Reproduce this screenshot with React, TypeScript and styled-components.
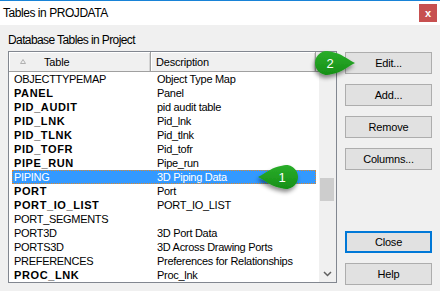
import React from 'react';
import styled, { createGlobalStyle } from 'styled-components';

const GlobalStyle = createGlobalStyle`
  html, body {
    margin: 0;
    padding: 0;
    background: #f0f0f0;
  }
  body {
    font-family: 'Liberation Sans', Arial, sans-serif;
  }
`;

const Window = styled.div`
  position: relative;
  width: 440px;
  height: 291px;
  box-sizing: border-box;
  border-top: 1px solid #1883d7;
  background: #f0f0f0;
  display: flex;
  flex-direction: column;
  overflow: hidden;
`;

const TitleBar = styled.div`
  height: 24px;
  background: #ffffff;
  display: flex;
  align-items: center;
  justify-content: space-between;
  padding: 0 3px;
`;

const Title = styled.span`
  font-size: 12px;
  line-height: 15px;
  letter-spacing: -0.45px;
  color: #000;
`;

const CloseX = styled.div`
  width: 18px;
  height: 18px;
  background: #c75050;
  color: #fff;
  font-size: 11px;
  font-weight: bold;
  display: flex;
  align-items: center;
  justify-content: center;
  line-height: 1;
`;

const Body = styled.div`
  flex: 1;
  display: flex;
  padding: 0 8px;
`;

const LeftPane = styled.div`
  width: 329px;
  display: flex;
  flex-direction: column;
`;

const Label = styled.div`
  padding-top: 8px;
  font-size: 12px;
  line-height: 15px;
  letter-spacing: -0.6px;
  color: #000;
  margin-bottom: 3px;
`;

const ListBox = styled.div`
  height: 232px;
  box-sizing: border-box;
  border: 1px solid #828790;
  background: #fff;
  display: flex;
  overflow: hidden;
`;

const ListMain = styled.div`
  flex: 1;
  display: flex;
  flex-direction: column;
  min-width: 0;
`;

const HeaderRow = styled.div`
  height: 20px;
  display: flex;
  background: #f0f0f0;
  box-sizing: border-box;
  border-bottom: 1px solid #a0a0a0;
`;

const HeaderCell = styled.div<{ $w: number; $pad: number }>`
  width: ${p => p.$w}px;
  box-sizing: border-box;
  padding-left: ${p => p.$pad}px;
  display: flex;
  align-items: center;
  gap: 18px;
  font-size: 11px;
  letter-spacing: -0.2px;
  color: #000;
  border-right: 1px solid #a0a0a0;
  box-shadow: inset 1px 1px #ffffff, inset -1px 0 #d4d4d4;
`;

const HeaderFill = styled.div`
  flex: 1;
`;

const Rows = styled.div`
  flex: 1;
  padding-left: 3px;
`;

const Row = styled.div<{ $selected?: boolean }>`
  width: 304px;
  height: 14px;
  box-sizing: border-box;
  display: flex;
  align-items: center;
  background: ${p => (p.$selected ? '#3399ff' : 'transparent')};
  color: ${p => (p.$selected ? '#fff' : '#000')};
  outline: ${p => (p.$selected ? '1px dotted #e0892a' : 'none')};
  outline-offset: -1px;
  font-size: 11px;
  line-height: 14px;
  white-space: nowrap;
`;

const NameCell = styled.span<{ $bold?: boolean }>`
  width: 139px;
  box-sizing: border-box;
  padding-left: 2px;
  font-weight: ${p => (p.$bold ? 'bold' : 'normal')};
  letter-spacing: ${p => (p.$bold ? '0.6px' : '-0.3px')};
`;

const DescCell = styled.span`
  flex: 1;
  padding-left: 6px;
  letter-spacing: -0.3px;
`;

const ScrollBar = styled.div`
  width: 17px;
  background: #f0f0f0;
  display: flex;
  flex-direction: column;
`;

const ArrowBox = styled.div`
  height: 17px;
  display: flex;
  align-items: center;
  justify-content: center;
`;

const Track = styled.div`
  flex: 1;
  padding: 0 2px 0 1px;
`;

const Thumb = styled.div<{ $top: number; $h: number }>`
  margin-top: ${p => p.$top}px;
  height: ${p => p.$h}px;
  background: #cdcdcd;
`;

const ButtonCol = styled.div`
  flex: 1;
  display: flex;
  flex-direction: column;
  padding: 27px 0 6px 8px;
`;

const ButtonGroup = styled.div<{ $bottom?: boolean }>`
  display: flex;
  flex-direction: column;
  gap: 10px;
  margin-top: ${p => (p.$bottom ? 'auto' : '0')};
`;

const Button = styled.button<{ $default?: boolean }>`
  width: 87px;
  height: 22px;
  box-sizing: border-box;
  background: #e1e1e1;
  border: ${p => (p.$default ? '2px solid #0078d7' : '1px solid #adadad')};
  font-family: 'Liberation Sans', Arial, sans-serif;
  font-size: 11px;
  letter-spacing: -0.2px;
  color: #000;
  padding: 0;
  cursor: default;
`;

const CalloutSvg = styled.svg<{ $x: number; $y: number }>`
  position: absolute;
  left: ${p => p.$x}px;
  top: ${p => p.$y}px;
  overflow: visible;
`;

const CalloutText = styled.text`
  font-family: 'Liberation Sans', Arial, sans-serif;
  font-size: 13px;
  fill: #fff;
`;

type TableRow = { name: string; desc: string; bold?: boolean; selected?: boolean };

const rows: TableRow[] = [
  { name: 'OBJECTTYPEMAP', desc: 'Object Type Map' },
  { name: 'PANEL', desc: 'Panel', bold: true },
  { name: 'PID_AUDIT', desc: 'pid audit table', bold: true },
  { name: 'PID_LNK', desc: 'Pid_lnk', bold: true },
  { name: 'PID_TLNK', desc: 'Pid_tlnk', bold: true },
  { name: 'PID_TOFR', desc: 'Pid_tofr', bold: true },
  { name: 'PIPE_RUN', desc: 'Pipe_run', bold: true },
  { name: 'PIPING', desc: '3D Piping Data', selected: true },
  { name: 'PORT', desc: 'Port', bold: true },
  { name: 'PORT_IO_LIST', desc: 'PORT_IO_LIST', bold: true },
  { name: 'PORT_SEGMENTS', desc: '' },
  { name: 'PORT3D', desc: '3D Port Data' },
  { name: 'PORTS3D', desc: '3D Across Drawing Ports' },
  { name: 'PREFERENCES', desc: 'Preferences for Relationships' },
  { name: 'PROC_LNK', desc: 'Proc_lnk', bold: true },
];

// green teardrop marker; tip on the left or right side
const Callout: React.FC<{ x: number; y: number; n: string; pointLeft?: boolean; id: string }> = ({ x, y, n, pointLeft, id }) => {
  const d = pointLeft
    ? 'M4 16 C 12 12, 18 6, 28 4.7 A 12 12 0 1 1 28 27.3 C 18 26, 12 20, 4 16 Z'
    : 'M44 16 C 36 12, 30 6, 20 4.7 A 12 12 0 1 0 20 27.3 C 30 26, 36 20, 44 16 Z';
  return (
    <CalloutSvg $x={x} $y={y} width="48" height="34" viewBox="0 0 48 34">
      <defs>
        <filter id={`sh${id}`} x="-30%" y="-30%" width="160%" height="170%">
          <feDropShadow dx="-1" dy="3" stdDeviation="2" floodColor="#000" floodOpacity="0.45" />
        </filter>
        <linearGradient id={`g${id}`} x1="0" y1="0" x2="0" y2="1">
          <stop offset="0" stopColor="#2aae2a" />
          <stop offset="1" stopColor="#178f17" />
        </linearGradient>
      </defs>
      <path d={d} fill={`url(#g${id})`} filter={`url(#sh${id})`} />
      <CalloutText x={pointLeft ? 28 : 19} y="21" textAnchor="middle">{n}</CalloutText>
    </CalloutSvg>
  );
};

const App: React.FC = () => {
  return (
    <>
      <GlobalStyle />
      <Window>
        <TitleBar>
          <Title>Tables in PROJDATA</Title>
          <CloseX>x</CloseX>
        </TitleBar>
        <Body>
          <LeftPane>
            <Label>Database Tables in Project</Label>
            <ListBox>
              <ListMain>
                <HeaderRow>
                  <HeaderCell $w={142} $pad={11}>
                    <svg width="6" height="5" viewBox="0 0 6 5">
                      <path d="M0.5 4.5 L3 0.5 L5.5 4.5 Z" fill="none" stroke="#b0b0b0" strokeWidth="1" />
                    </svg>
                    <span>Table</span>
                  </HeaderCell>
                  <HeaderCell $w={165} $pad={5}>Description</HeaderCell>
                  <HeaderFill />
                </HeaderRow>
                <Rows>
                  {rows.map(r => (
                    <Row key={r.name} $selected={r.selected}>
                      <NameCell $bold={r.bold}>{r.name}</NameCell>
                      <DescCell>{r.desc}</DescCell>
                    </Row>
                  ))}
                </Rows>
              </ListMain>
              <ScrollBar>
                <ArrowBox>
                  <svg width="9" height="6" viewBox="0 0 9 6">
                    <polyline points="1,5 4.5,1.5 8,5" fill="none" stroke="#606060" strokeWidth="1.5" />
                  </svg>
                </ArrowBox>
                <Track>
                  <Thumb $top={109} $h={23} />
                </Track>
                <ArrowBox>
                  <svg width="9" height="6" viewBox="0 0 9 6">
                    <polyline points="1,1 4.5,4.5 8,1" fill="none" stroke="#606060" strokeWidth="1.5" />
                  </svg>
                </ArrowBox>
              </ScrollBar>
            </ListBox>
          </LeftPane>
          <ButtonCol>
            <ButtonGroup>
              <Button>Edit...</Button>
              <Button>Add...</Button>
              <Button>Remove</Button>
              <Button>Columns...</Button>
            </ButtonGroup>
            <ButtonGroup $bottom>
              <Button $default>Close</Button>
              <Button>Help</Button>
            </ButtonGroup>
          </ButtonCol>
        </Body>
        <Callout id="1" x={254} y={160} n="1" pointLeft />
        <Callout id="2" x={311} y={46} n="2" />
      </Window>
    </>
  );
};

export default App;
